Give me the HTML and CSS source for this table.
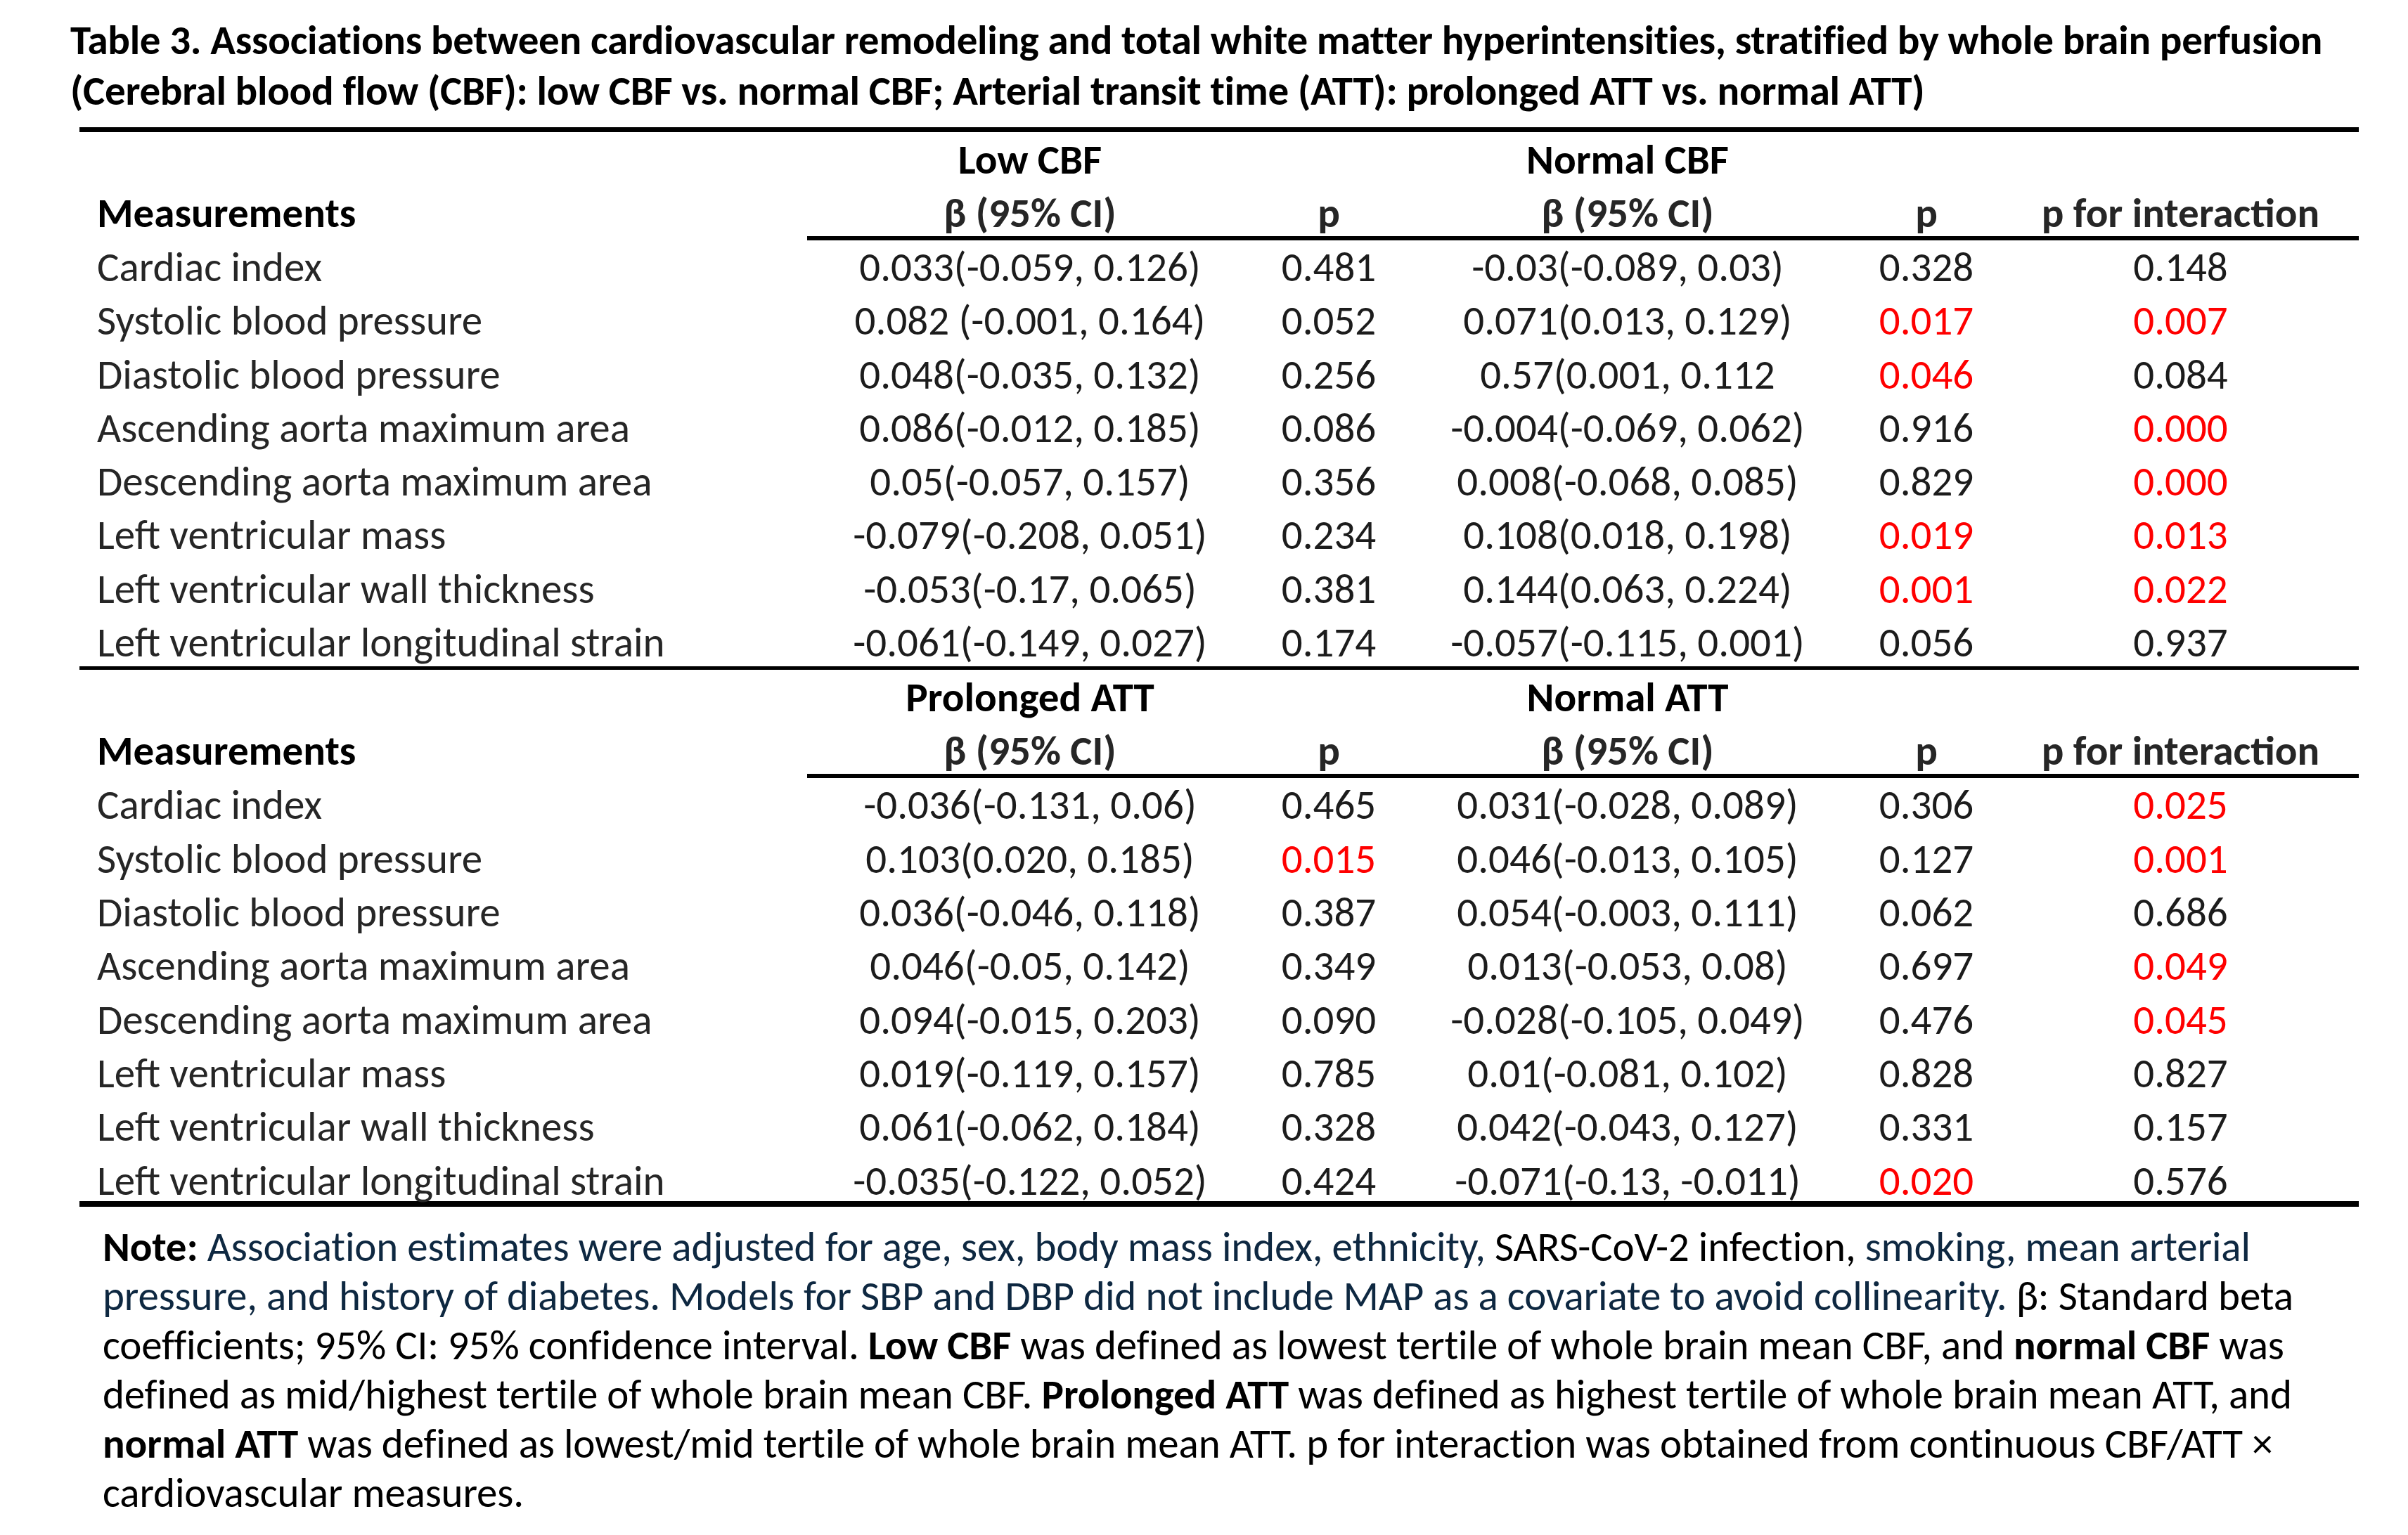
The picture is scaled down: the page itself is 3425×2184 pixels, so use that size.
FILE: index.html
```html
<!DOCTYPE html>
<html lang="en">
<head>
<meta charset="utf-8">
<title>Table 3</title>
<link rel="stylesheet" href="styles.css">
</head>
<body>
<div class="page">
  <h1 class="caption">Table 3. Associations between cardiovascular remodeling and total white matter hyperintensities, stratified by whole brain perfusion (Cerebral blood flow (CBF): low CBF vs. normal CBF; Arterial transit time (ATT): prolonged ATT vs. normal ATT)</h1>

  <table class="results">
    <colgroup>
      <col class="c-label">
      <col class="c-beta">
      <col class="c-p">
      <col class="c-beta">
      <col class="c-p">
      <col class="c-int">
    </colgroup>
    <tbody class="section first">
      <tr class="group-row">
        <td></td><th>Low CBF</th><td></td><th>Normal CBF</th><td></td><td></td>
      </tr>
      <tr class="head-row">
        <th class="label">Measurements</th><th>β (95% CI)</th><th>p</th><th>β (95% CI)</th><th>p</th><th>p for interaction</th>
      </tr>
      <tr><td class="label">Cardiac index</td><td>0.033(-0.059, 0.126)</td><td>0.481</td><td>-0.03(-0.089, 0.03)</td><td>0.328</td><td>0.148</td></tr>
      <tr><td class="label">Systolic blood pressure</td><td>0.082 (-0.001, 0.164)</td><td>0.052</td><td>0.071(0.013, 0.129)</td><td class="sig">0.017</td><td class="sig">0.007</td></tr>
      <tr><td class="label">Diastolic blood pressure</td><td>0.048(-0.035, 0.132)</td><td>0.256</td><td>0.57(0.001, 0.112</td><td class="sig">0.046</td><td>0.084</td></tr>
      <tr><td class="label">Ascending aorta maximum area</td><td>0.086(-0.012, 0.185)</td><td>0.086</td><td>-0.004(-0.069, 0.062)</td><td>0.916</td><td class="sig">0.000</td></tr>
      <tr><td class="label">Descending aorta maximum area</td><td>0.05(-0.057, 0.157)</td><td>0.356</td><td>0.008(-0.068, 0.085)</td><td>0.829</td><td class="sig">0.000</td></tr>
      <tr><td class="label">Left ventricular mass</td><td>-0.079(-0.208, 0.051)</td><td>0.234</td><td>0.108(0.018, 0.198)</td><td class="sig">0.019</td><td class="sig">0.013</td></tr>
      <tr><td class="label">Left ventricular wall thickness</td><td>-0.053(-0.17, 0.065)</td><td>0.381</td><td>0.144(0.063, 0.224)</td><td class="sig">0.001</td><td class="sig">0.022</td></tr>
      <tr class="last-row"><td class="label">Left ventricular longitudinal strain</td><td>-0.061(-0.149, 0.027)</td><td>0.174</td><td>-0.057(-0.115, 0.001)</td><td>0.056</td><td>0.937</td></tr>
    </tbody>
    <tbody class="section second">
      <tr class="group-row">
        <td></td><th>Prolonged ATT</th><td></td><th>Normal ATT</th><td></td><td></td>
      </tr>
      <tr class="head-row">
        <th class="label">Measurements</th><th>β (95% CI)</th><th>p</th><th>β (95% CI)</th><th>p</th><th>p for interaction</th>
      </tr>
      <tr><td class="label">Cardiac index</td><td>-0.036(-0.131, 0.06)</td><td>0.465</td><td>0.031(-0.028, 0.089)</td><td>0.306</td><td class="sig">0.025</td></tr>
      <tr><td class="label">Systolic blood pressure</td><td>0.103(0.020, 0.185)</td><td class="sig">0.015</td><td>0.046(-0.013, 0.105)</td><td>0.127</td><td class="sig">0.001</td></tr>
      <tr><td class="label">Diastolic blood pressure</td><td>0.036(-0.046, 0.118)</td><td>0.387</td><td>0.054(-0.003, 0.111)</td><td>0.062</td><td>0.686</td></tr>
      <tr><td class="label">Ascending aorta maximum area</td><td>0.046(-0.05, 0.142)</td><td>0.349</td><td>0.013(-0.053, 0.08)</td><td>0.697</td><td class="sig">0.049</td></tr>
      <tr><td class="label">Descending aorta maximum area</td><td>0.094(-0.015, 0.203)</td><td>0.090</td><td>-0.028(-0.105, 0.049)</td><td>0.476</td><td class="sig">0.045</td></tr>
      <tr><td class="label">Left ventricular mass</td><td>0.019(-0.119, 0.157)</td><td>0.785</td><td>0.01(-0.081, 0.102)</td><td>0.828</td><td>0.827</td></tr>
      <tr><td class="label">Left ventricular wall thickness</td><td>0.061(-0.062, 0.184)</td><td>0.328</td><td>0.042(-0.043, 0.127)</td><td>0.331</td><td>0.157</td></tr>
      <tr class="last-row"><td class="label">Left ventricular longitudinal strain</td><td>-0.035(-0.122, 0.052)</td><td>0.424</td><td>-0.071(-0.13, -0.011)</td><td class="sig">0.020</td><td>0.576</td></tr>
    </tbody>
  </table>

  <p class="note"><b>Note:</b> <span class="navy">Association estimates were adjusted for age, sex, body mass index, ethnicity,</span> SARS-CoV-2 infection, <span class="navy">smoking, mean arterial<br>pressure, and history of diabetes. Models for SBP and DBP did not include MAP as a covariate to avoid collinearity.</span> β: Standard beta<br>coefficients; 95% CI: 95% confidence interval. <b>Low CBF</b> was defined as lowest tertile of whole brain mean CBF, and <b>normal CBF</b> was<br>defined as mid/highest tertile of whole brain mean CBF. <b>Prolonged ATT</b> was defined as highest tertile of whole brain mean ATT, and<br><b>normal ATT</b> was defined as lowest/mid tertile of whole brain mean ATT. p for interaction was obtained from continuous CBF/ATT ×<br>cardiovascular measures.</p>
</div>
</body>
</html>
```

FILE: styles.css
```css
html, body {
  margin: 0;
  padding: 0;
  background: #ffffff;
}

body {
  font-family: "Carlito", "Calibri", "Lato", "Liberation Sans", sans-serif;
  color: #000000;
  width: 3425px;
  height: 2184px;
  overflow: hidden;
}

.page {
  padding: 21px 0 0 100px;
}

.caption {
  margin: 0;
  width: 3260px;
  font-size: 59px;
  line-height: 72px;
  font-weight: 700;
  letter-spacing: -0.3px;
}

.results {
  margin: 16px 0 0 13px;
  width: 3242px;
  border-collapse: separate;
  border-spacing: 0;
  table-layout: fixed;
  font-size: 59px;
}

.c-label { width: 1035px; }
.c-beta { width: 634px; }
.c-p { width: 216px; }
.c-int { width: 507px; }

.results th,
.results td {
  padding: 0;
  text-align: center;
  vertical-align: baseline;
  white-space: nowrap;
  line-height: 76.3px;
  color: #1c1c1c;
  font-weight: 400;
}

.results th {
  font-weight: 700;
}

.results .label {
  text-align: left;
  padding-left: 25px;
  color: #262626;
}

.results th.label {
  color: #000000;
}

.group-row th,
.group-row td {
  line-height: 78px;
  color: #000000;
}

.head-row th {
  padding-top: 4px;
  line-height: 66px;
  color: #262626;
  border-bottom: 6px solid #000000;
}

.head-row th.label {
  border-bottom: 0;
  color: #000000;
}

.first .group-row th,
.first .group-row td {
  border-top: 7px solid #000000;
}

.first .last-row td {
  padding-top: 4.1px;
  line-height: 68.2px;
  border-bottom: 5px solid #000000;
}

.second .last-row td {
  padding-top: 9.1px;
  line-height: 58.2px;
  border-bottom: 8px solid #000000;
}

.results td.sig {
  color: #ff0000;
}

.note {
  margin: 22px 0 0 46px;
  font-size: 59px;
  line-height: 70px;
  color: #000000;
  white-space: nowrap;
  letter-spacing: -0.15px;
}

.note .navy {
  color: #0e2841;
}
```
